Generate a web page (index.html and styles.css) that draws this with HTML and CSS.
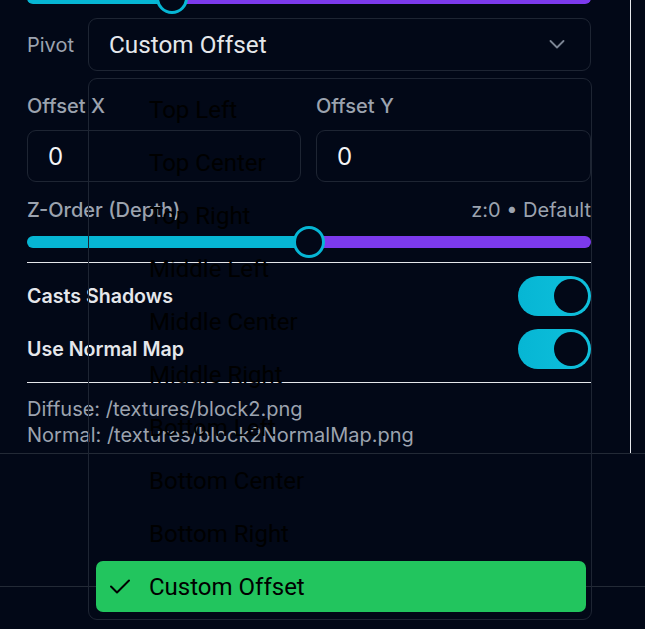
FILE: index.html
```html
<!DOCTYPE html>
<html lang="en">
<head>
<meta charset="utf-8">
<title>Sprite Properties</title>
<link rel="stylesheet" href="styles.css">
</head>
<body>
<div class="app">
  <div class="panel">
    <div class="content">
      <div class="slider first">
        <div class="track" style="--p: 145px"></div>
        <div class="thumb" style="--p: 145px"></div>
      </div>

      <div class="pivot-row">
        <span class="label pivot-label">Pivot</span>
        <div class="select">
          <span class="select-value">Custom Offset</span>
          <svg class="chevron" width="16" height="9" viewBox="0 0 16 9"><polyline points="1.5,1 8,7.5 14.5,1" fill="none" stroke="#7c8594" stroke-width="1.8" stroke-linecap="round" stroke-linejoin="round"/></svg>
        </div>
      </div>

      <div class="offset-grid">
        <div class="field">
          <span class="label">Offset X</span>
          <div class="input">0</div>
        </div>
        <div class="field">
          <span class="label">Offset Y</span>
          <div class="input">0</div>
        </div>
      </div>

      <div class="z-head">
        <span class="label">Z-Order (Depth)</span>
        <span class="z-value">z:0 • Default</span>
      </div>
      <div class="slider">
        <div class="track" style="--p: 282px"></div>
        <div class="thumb" style="--p: 282px"></div>
      </div>

      <div class="divider"></div>

      <div class="toggle-row">
        <span class="toggle-label">Casts Shadows</span>
        <div class="toggle"><span class="knob"></span></div>
      </div>
      <div class="toggle-row">
        <span class="toggle-label">Use Normal Map</span>
        <div class="toggle"><span class="knob"></span></div>
      </div>

      <div class="divider"></div>

      <div class="paths">
        <div>Diffuse: /textures/block2.png</div>
        <div>Normal: /textures/block2NormalMap.png</div>
      </div>
    </div>
  </div>
  <div class="footer"></div>

  <div class="dropdown">
    <div class="option"><span class="check"></span>Top Left</div>
    <div class="option"><span class="check"></span>Top Center</div>
    <div class="option"><span class="check"></span>Top Right</div>
    <div class="option"><span class="check"></span>Middle Left</div>
    <div class="option"><span class="check"></span>Middle Center</div>
    <div class="option"><span class="check"></span>Middle Right</div>
    <div class="option"><span class="check"></span>Bottom Left</div>
    <div class="option"><span class="check"></span>Bottom Center</div>
    <div class="option"><span class="check"></span>Bottom Right</div>
    <div class="option selected"><span class="check"><svg width="20" height="15" viewBox="0 0 20 15"><polyline points="1,7.5 7,13.5 19,1.5" fill="none" stroke="#000" stroke-width="2" stroke-linecap="round" stroke-linejoin="round"/></svg></span>Custom Offset</div>
  </div>
</div>
</body>
</html>
```

FILE: styles.css
```css
* { box-sizing: border-box; }

html, body {
  margin: 0;
  padding: 0;
  background: #020817;
}

body {
  font-family: Inter, "Noto Sans", sans-serif;
  color: #e5e7eb;
}

.app {
  position: relative;
  width: 645px;
  height: 629px;
  overflow: hidden;
  background: #020817;
}

.panel {
  width: 631px;
  height: 453px;
  overflow: hidden;
  border-right: 1px solid #e5e7eb;
  padding: 0 39px 0 27px;
}

.content {
  display: flex;
  flex-direction: column;
  margin-top: -18px;
}

.label {
  font-size: 20px;
  line-height: 24px;
  font-weight: 500;
  color: #9ca3af;
  white-space: nowrap;
}

/* slider */
.slider {
  position: relative;
  height: 32px;
  display: flex;
  align-items: center;
  flex-shrink: 0;
}

.slider + .divider { margin-top: 4px; }

.track {
  width: 100%;
  height: 12px;
  border-radius: 6px;
  background: linear-gradient(to right, #06b6d4 var(--p), #7c3aed var(--p));
}

.thumb {
  position: absolute;
  top: 0;
  left: calc(var(--p) - 16px);
  width: 32px;
  height: 32px;
  border-radius: 50%;
  border: 3px solid #06b6d4;
  background: #020817;
}

/* pivot */
.pivot-row {
  display: flex;
  align-items: center;
  margin-top: 4px;
}

.pivot-label {
  width: 61px;
  flex-shrink: 0;
  font-weight: 400;
}

.select {
  flex: 1;
  height: 53px;
  border: 1px solid #1e2533;
  border-radius: 9px;
  padding: 0 25px 0 20px;
  display: flex;
  align-items: center;
  justify-content: space-between;
}

.select-value {
  font-family: Roboto, sans-serif;
  font-size: 24.3px;
  color: #e5e7eb;
}

/* offsets */
.offset-grid {
  display: grid;
  grid-template-columns: 274px 275px;
  column-gap: 15px;
  margin-top: 23px;
}

.field {
  display: flex;
  flex-direction: column;
  gap: 12px;
}

.input {
  height: 52px;
  border: 1px solid #1e2533;
  border-radius: 9px;
  padding-left: 20px;
  display: flex;
  align-items: center;
  font-size: 24px;
  color: #f3f4f6;
}

/* z order */
.z-head {
  display: flex;
  justify-content: space-between;
  align-items: center;
  margin-top: 16px;
}

.z-head + .slider { margin-top: 4px; }

.z-value {
  font-size: 20px;
  line-height: 24px;
  color: #9ca3af;
}

.divider {
  height: 1px;
  background: #e5e7eb;
  flex-shrink: 0;
}

/* toggles */
.toggle-row {
  display: flex;
  justify-content: space-between;
  align-items: center;
  height: 40px;
  margin-top: 13px;
}

.toggle-row + .divider { margin-top: 13px; }

.toggle-label {
  font-size: 19.6px;
  font-weight: 600;
  color: #e5e7eb;
}

.toggle {
  width: 73px;
  height: 40px;
  border-radius: 20px;
  background: linear-gradient(to right, #06b6d4, #0fc0dc);
  padding: 3px;
  display: flex;
  justify-content: flex-end;
}

.knob {
  width: 34px;
  height: 34px;
  border-radius: 50%;
  background: #020817;
}

/* paths */
.paths {
  margin-top: 13px;
  font-size: 20px;
  line-height: 26px;
  color: #9ca3af;
}

.footer {
  height: 134px;
  border-top: 1px solid #232a36;
  border-bottom: 1px solid #232a36;
}

/* dropdown */
.dropdown {
  position: absolute;
  left: 88px;
  top: 78px;
  width: 504px;
  height: 542px;
  border: 1px solid #1e2533;
  border-radius: 9px;
  padding: 5px 5px 7px 7px;
  display: flex;
  flex-direction: column;
  gap: 2px;
}

.option {
  height: 51px;
  display: flex;
  align-items: center;
  padding-left: 14px;
  font-family: Roboto, sans-serif;
  font-size: 24px;
  color: #000;
  border-radius: 7px;
}

.check {
  width: 39px;
  flex-shrink: 0;
  display: flex;
  align-items: center;
}

.option.selected {
  background: #22c55e;
}
```
